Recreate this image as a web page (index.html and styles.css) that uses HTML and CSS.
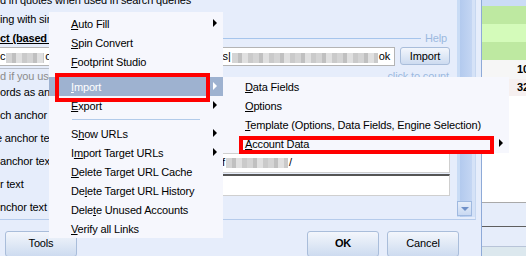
FILE: index.html
```html
<!DOCTYPE html>
<html lang="en">
<head>
  <meta charset="UTF-8">
  <title>Tools menu - Import</title>
  <link rel="stylesheet" href="styles.css">
</head>
<body>
  <div class="window">
    <div class="dialog">
      <div class="panel">
        <div class="form">
          <div class="line first">d in quotes when used in search queries</div>
          <div class="line">ing with similar words</div>
          <div class="group-head">
            <span class="title">ct (based on keywords)</span>
            <span class="rule"></span>
            <span class="link">Help</span>
          </div>
          <div class="import-row">
            <div class="field">
              <span>c<span class="blur blur-short"></span>o</span>
              <span>s|<span class="blur blur-long"></span>ok</span>
            </div>
            <button class="btn btn-import">Import</button>
          </div>
          <div class="hint-row">
            <span class="hint">d if you use anchor text</span>
            <span class="link count">click to count</span>
          </div>
          <div class="fields">
            <div class="label">ords as anchor text</div><div></div>
            <div class="label">ch anchor text</div><div></div>
            <div class="label cut">e anchor text</div><div></div>
            <div class="label">anchor text</div><div class="input input-one">f<span class="blur blur-mid"></span>/</div>
            <div class="label">r text</div><div class="input input-two"></div>
            <div class="label">nchor text</div><div></div>
          </div>
        </div>
        <div class="scrollbar">
          <div class="thumb"></div>
          <div class="down"><span class="down-arrow"></span></div>
        </div>
      </div>
      <div class="footer">
        <button class="btn btn-tools">Tools</button>
        <button class="btn btn-ok">OK</button>
        <button class="btn">Cancel</button>
      </div>
    </div>
    <div class="side">
      <div class="side-head"></div>
      <div class="side-row green"></div>
      <div class="side-row lime"></div>
      <div class="side-row green"></div>
      <div class="side-row num">10</div>
      <div class="side-row num pink">32</div>
      <div class="side-blank"></div>
      <div class="side-band"></div>
      <div class="side-band dark"></div>
      <div class="side-foot"></div>
    </div>
  </div>

  <div class="menu">
    <div class="item has-sub"><span><u>A</u>uto Fill</span></div>
    <div class="item"><span><u>S</u>pin Convert</span></div>
    <div class="item"><span><u>F</u>ootprint Studio</span></div>
    <div class="sep sep-first"></div>
    <div class="item has-sub active"><span><u>I</u>mport</span></div>
    <div class="item has-sub"><span><u>E</u>xport</span></div>
    <div class="sep"></div>
    <div class="item has-sub"><span>S<u>h</u>ow URLs</span></div>
    <div class="item has-sub"><span>I<u>m</u>port Target URLs</span></div>
    <div class="item"><span><u>D</u>elete Target URL Cache</span></div>
    <div class="item"><span>De<u>l</u>ete Target URL History</span></div>
    <div class="item"><span>Dele<u>t</u>e Unused Accounts</span></div>
    <div class="item"><span><u>V</u>erify all Links</span></div>
  </div>

  <div class="submenu">
    <div class="item"><span><u>D</u>ata Fields</span></div>
    <div class="item"><span><u>O</u>ptions</span></div>
    <div class="item"><span><u>T</u>emplate (Options, Data Fields, Engine Selection)</span></div>
    <div class="item has-sub"><span><u>A</u>ccount Data</span></div>
  </div>

  <div class="mark mark-import"></div>
  <div class="mark mark-account"></div>
</body>
</html>
```

FILE: styles.css
```css
body {
  margin: 0;
  width: 526px;
  height: 256px;
  overflow: hidden;
  position: relative;
  background: #e6edfb;
  font-family: "Liberation Sans", Arial, sans-serif;
  font-size: 11px;
  letter-spacing: -0.15px;
  color: #000;
}

.window {
  display: flex;
  height: 256px;
}

/* main dialog */
.dialog {
  width: 482px;
  flex-shrink: 0;
  box-sizing: border-box;
  border-right: 1px solid #8eaad8;
  display: flex;
  flex-direction: column;
}

.panel {
  width: 476px;
  height: 221px;
  box-sizing: border-box;
  display: flex;
  border-right: 1px solid #c6d7f0;
  border-bottom: 1px solid #b5cbeb;
}

.form {
  width: 457px;
  overflow: hidden;
}

.line {
  height: 19px;
  line-height: 19px;
  white-space: nowrap;
}

.line.first {
  margin-top: -9px;
}

.group-head {
  height: 18px;
  display: flex;
  align-items: center;
  padding-right: 10px;
  white-space: nowrap;
}

.title {
  font-weight: bold;
  text-decoration: underline;
}

.rule {
  flex: 1;
  height: 1px;
  background: #a6c5ec;
  margin: 0 4px 0 8px;
}

.link {
  color: #9bb9df;
}

.import-row {
  display: flex;
  gap: 5px;
  height: 19px;
  margin-left: -2px;
  padding-right: 7px;
}

.field {
  flex: 1;
  box-sizing: border-box;
  display: flex;
  justify-content: space-between;
  align-items: center;
  padding: 0 4px 0 1px;
  background: #fff;
  border: 1px solid #b4b4b4;
  white-space: nowrap;
}

.blur {
  display: inline-block;
  height: 10px;
  vertical-align: middle;
  margin: 0 1px;
  background: repeating-linear-gradient(90deg, #d4d4d4 0 6px, #c0c0c0 6px 10px, #e0e0e0 10px 16px, #cacaca 16px 21px);
}

.blur-short { width: 38px; }
.blur-long { width: 146px; }
.blur-mid { width: 62px; }

.hint-row {
  display: flex;
  justify-content: space-between;
  align-items: flex-start;
  height: 13px;
  margin-top: 2px;
  padding-right: 8px;
  white-space: nowrap;
}

.hint, .count {
  line-height: 14px;
}

.hint {
  width: 200px;
  color: #8c8c8c;
  border-top: 1px solid #b9bfca;
}

.count {
  padding-top: 1px;
}

.fields {
  display: grid;
  grid-template-columns: 200px 250px;
  grid-auto-rows: 23px;
}

.label {
  line-height: 23px;
  white-space: nowrap;
}

.label.cut {
  text-indent: -4px;
}

.input {
  box-sizing: border-box;
  background: #fff;
  border: 1px solid #cfcfcf;
  white-space: nowrap;
}

.input-one {
  height: 20px;
  margin-top: 3px;
  padding-left: 21px;
  line-height: 16px;
}

.input-two {
  height: 22px;
  margin-top: 1px;
  border-top: 2px solid #555;
}

/* scrollbar */
.scrollbar {
  width: 18px;
  height: 217px;
  display: flex;
  flex-direction: column;
  background: linear-gradient(90deg, #c9dcf5 0 3px, #b3caee 3px, #c4d6f3 15px, #d5e2f7 15px);
}

.thumb {
  flex: 1;
}

.down {
  width: 15px;
  height: 15px;
  margin-bottom: 1px;
  box-sizing: border-box;
  border: 1px solid #9fb9e0;
  background: linear-gradient(#e6eefa, #c9d9f2);
  display: flex;
  align-items: center;
  justify-content: center;
}

.down-arrow {
  border-top: 4px solid #6f90c8;
  border-left: 4px solid transparent;
  border-right: 4px solid transparent;
}

/* buttons */
.footer {
  display: flex;
  gap: 8px;
  padding: 11px 22px 0 5px;
}

.btn {
  font: inherit;
  letter-spacing: inherit;
  color: #000;
  padding: 0;
  border: 1px solid #a9bdda;
  border-radius: 3px;
  background: linear-gradient(#f3f6fc, #e0e9f6 50%, #cddbf0);
}

.footer .btn {
  width: 72px;
  height: 26px;
  line-height: 22px;
  padding-bottom: 2px;
}

.btn-import {
  width: 50px;
  height: 18px;
}

.btn-tools {
  margin-right: auto;
}

.btn-ok {
  font-weight: bold;
}

/* window on the right */
.side {
  flex: 1;
  display: flex;
  flex-direction: column;
  overflow: hidden;
}

.side-head {
  height: 6px;
  background: #cbdcf6;
}

.side-row {
  height: 18px;
  white-space: nowrap;
}

.side-row.green {
  background: #bee9a1;
}

.side-row.lime {
  background: #d4fbba;
}

.side-row.num {
  height: 19px;
  line-height: 19px;
  padding-left: 35px;
  font-weight: bold;
  background: #f6f6f6;
}

.side-row.pink {
  height: 17px;
  line-height: 17px;
  background: #f6f0f0;
}

.side-blank {
  flex: 1;
  background: #fff;
}

.side-band {
  height: 23px;
  background: #e6edfa;
  border-top: 1px solid #a9a9a9;
}

.side-band.dark {
  height: 19px;
  border-top: 1px solid #5e5e5e;
}

.side-foot {
  height: 9px;
  background: #dce8ee;
  border-top: 1px solid #b8c4d8;
}

/* popup menus */
.menu, .submenu {
  position: absolute;
  background: #f6f7fd;
}

.menu {
  left: 49px;
  top: 12px;
  width: 174px;
  padding-top: 2px;
}

.submenu {
  left: 223px;
  top: 77px;
  width: 286px;
}

.item {
  height: 19px;
  display: flex;
  align-items: center;
  padding: 0 6px 0 22px;
  white-space: nowrap;
}

.item.has-sub::after {
  content: "";
  margin-left: auto;
  margin-top: -1px;
  border-left: 4px solid #000;
  border-top: 4px solid transparent;
  border-bottom: 4px solid transparent;
}

.item.active {
  background: #9eb2d0;
  color: #fff;
}

.item.active::after {
  border-left-color: #fff;
}

.sep {
  height: 1px;
  margin: 4px 23px;
  background: #b2cbea;
}

.sep.sep-first {
  margin: 3px 23px 2px;
}

/* red highlight frames */
.mark {
  position: absolute;
  box-sizing: border-box;
  border: 4px solid #f00;
}

.mark-import {
  left: 55px;
  top: 73px;
  width: 155px;
  height: 29px;
}

.mark-account {
  left: 239px;
  top: 136px;
  width: 255px;
  height: 18px;
}
```
